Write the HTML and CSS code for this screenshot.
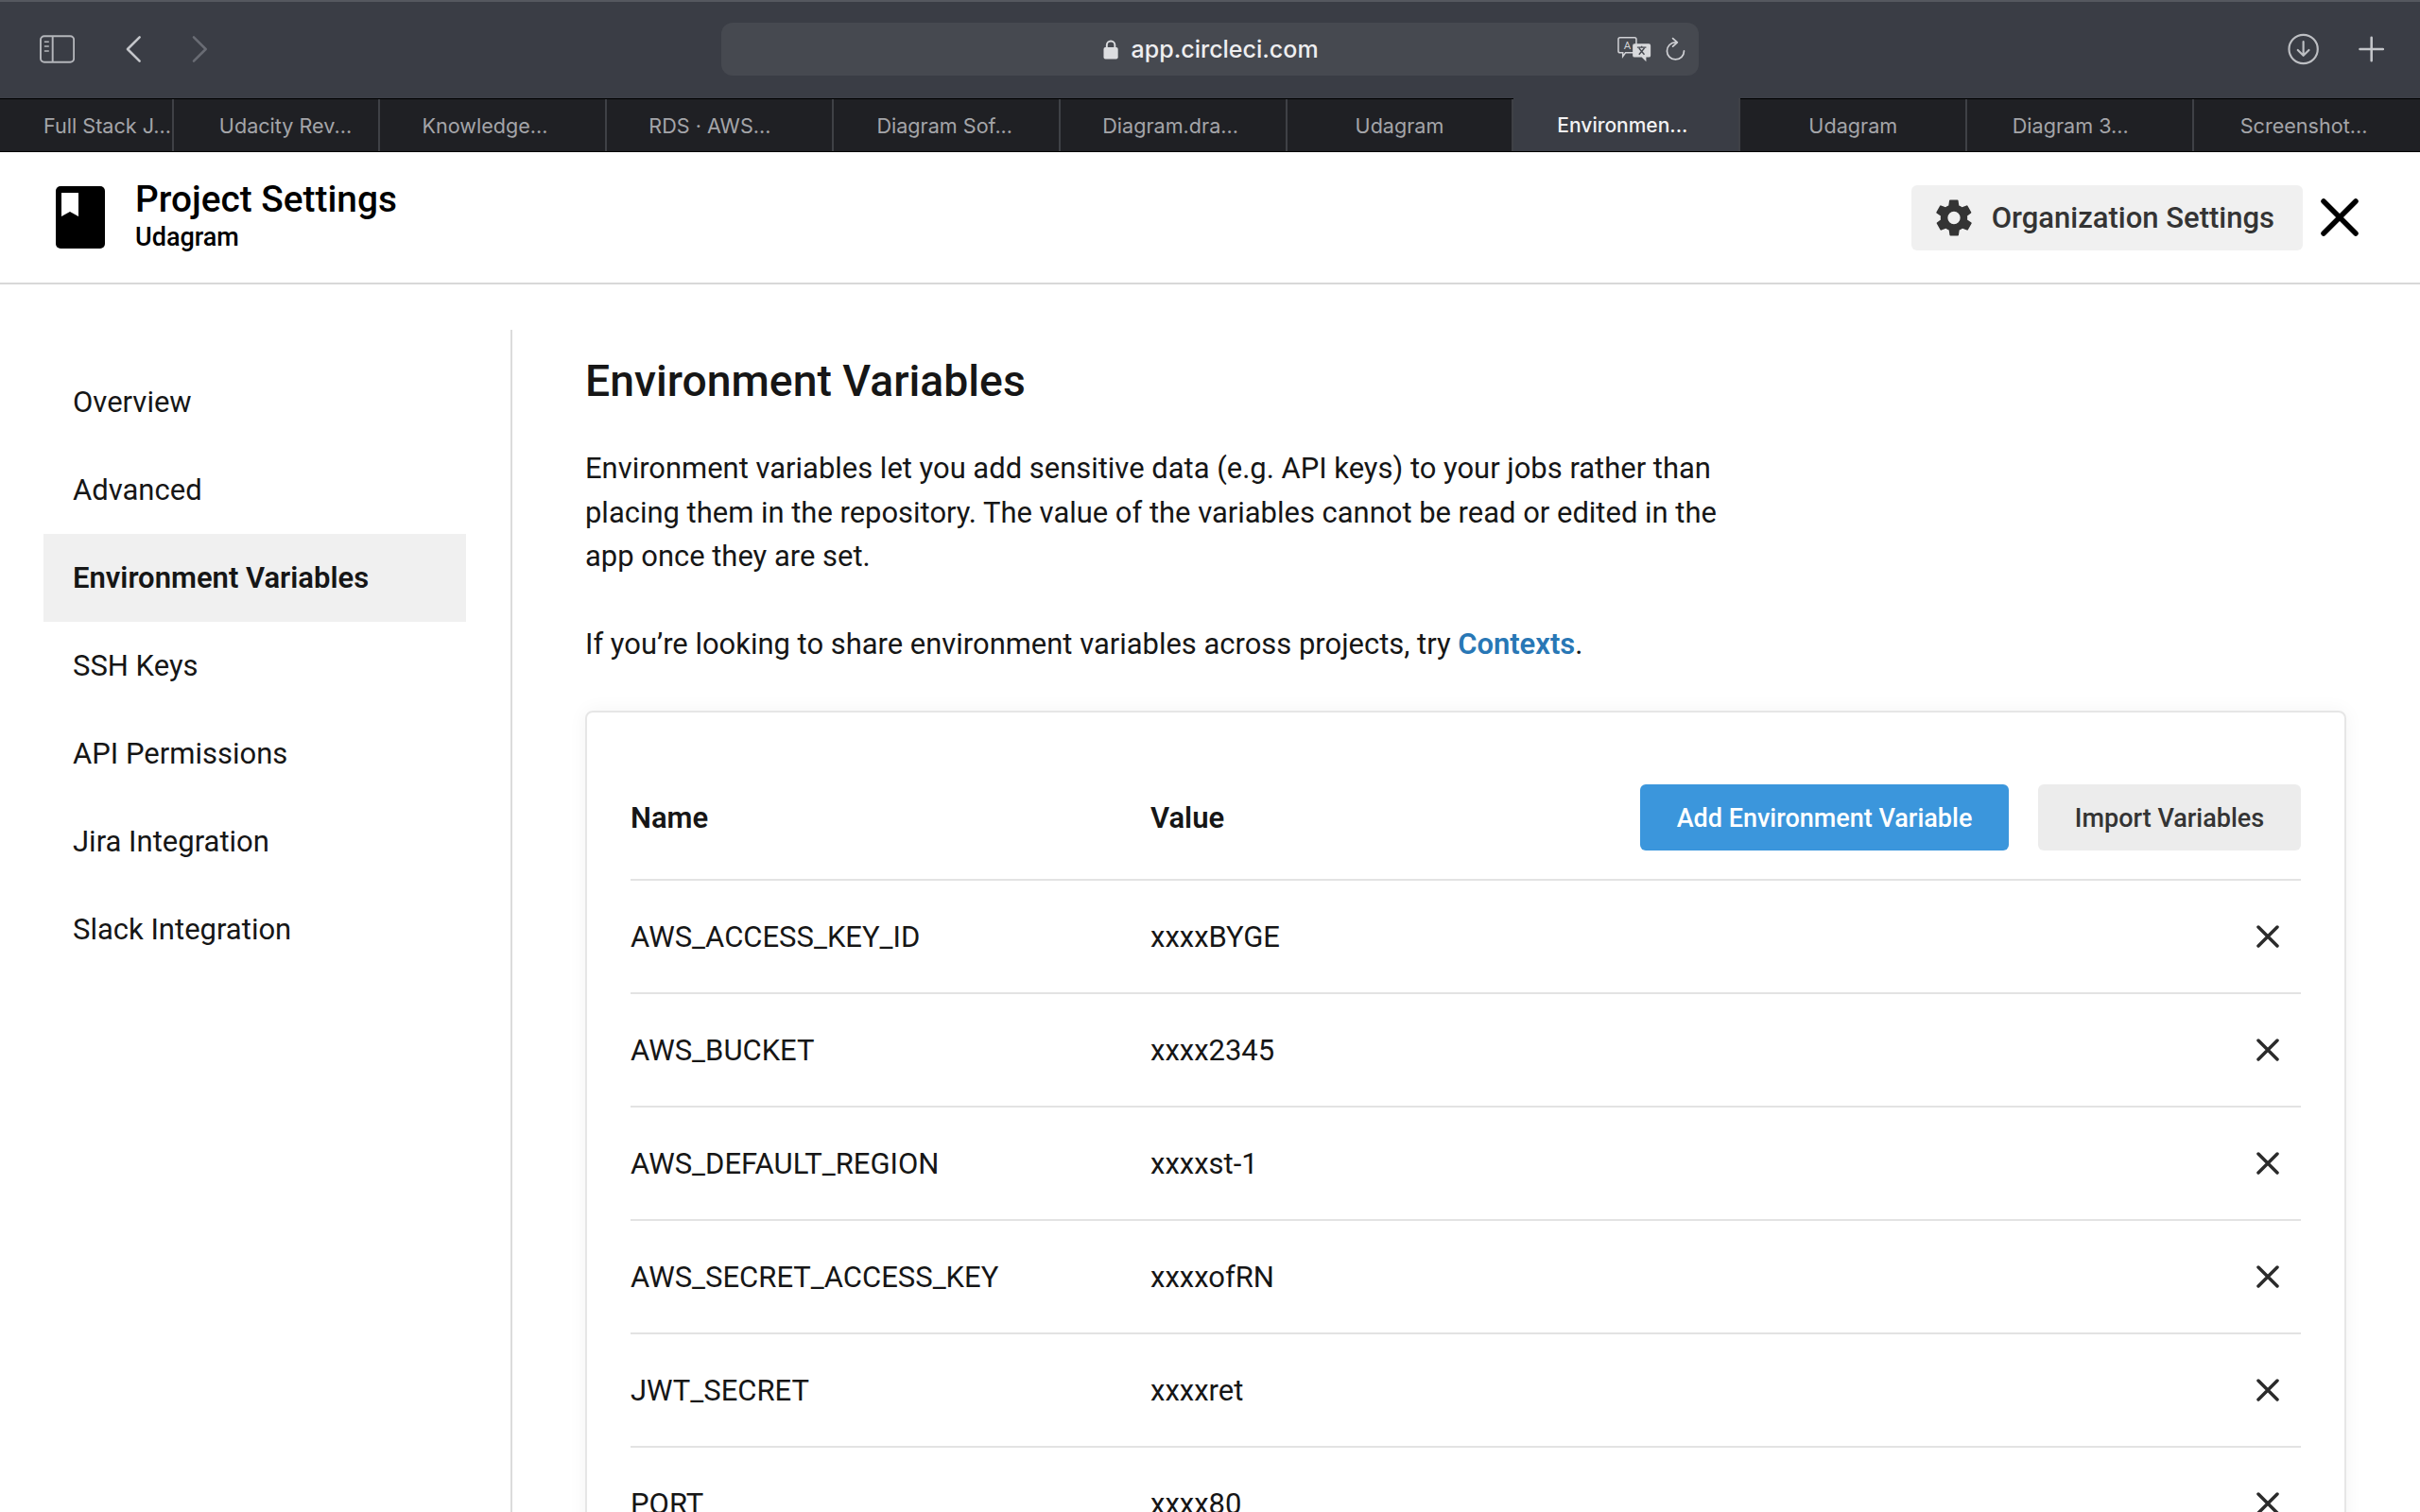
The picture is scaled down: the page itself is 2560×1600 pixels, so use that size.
FILE: index.html
```html
<!DOCTYPE html>
<html lang="en">
<head>
  <meta charset="UTF-8">
  <title>Project Settings</title>
  <link rel="stylesheet" href="styles.css">
</head>
<body>
  <div class="toolbar">
    <svg class="tool-sidebar" width="38" height="30" viewBox="0 0 38 30" fill="none" stroke="#b4b6bb" stroke-width="2">
      <rect x="1" y="1" width="36" height="28" rx="4"/>
      <path d="M14 1v28"/>
      <path d="M5 7h5M5 12h5M5 17h5" stroke-width="1.6"/>
    </svg>
    <svg class="tool-back" width="18" height="30" viewBox="0 0 18 30" fill="none" stroke="#c4c6ca" stroke-width="2.6" stroke-linecap="round" stroke-linejoin="round">
      <path d="M16 2L3 15l13 13"/>
    </svg>
    <svg class="tool-forward" width="18" height="30" viewBox="0 0 18 30" fill="none" stroke="#696c74" stroke-width="2.6" stroke-linecap="round" stroke-linejoin="round">
      <path d="M2 2l13 13L2 28"/>
    </svg>
    <div class="urlbar">
      <svg class="url-lock" width="17" height="22" viewBox="0 0 17 22">
        <path d="M4 10V6.500a4.500 4.500 0 0 1 9 0V10" fill="none" stroke="#dcdde0" stroke-width="2"/>
        <rect x="0.5" y="9" width="16" height="13" rx="2" fill="#dcdde0"/>
      </svg>
      <span class="url-text">app.circleci.com</span>
      <svg class="url-translate" width="38" height="28" viewBox="0 0 38 28">
        <path d="M3 1h16a2 2 0 0 1 2 2v13a2 2 0 0 1-2 2H9l-3 4v-4H3a2 2 0 0 1-2-2V3a2 2 0 0 1 2-2z" fill="none" stroke="#d0d1d5" stroke-width="1.6"/>
        <text x="11" y="14" class="translate-a">A</text>
        <path d="M19 8h16a2 2 0 0 1 2 2v11a2 2 0 0 1-2 2h-3v5l-5-5h-8a2 2 0 0 1-2-2V10a2 2 0 0 1 2-2z" fill="#d8d9dc"/>
        <path d="M22 12h10M27 10.500v2M24 20l6-7M30 20l-6-7" stroke="#464950" stroke-width="1.5" fill="none"/>
      </svg>
      <svg class="url-reload" width="22" height="26" viewBox="0 0 22 26" fill="none" stroke="#d0d1d5" stroke-width="1.8" stroke-linecap="round" stroke-linejoin="round">
        <path d="M11 5.500a9.500 9.500 0 1 0 9.500 9.500"/>
        <path d="M8 1l5 4.500-5 4.500"/>
      </svg>
    </div>
    <svg class="tool-download" width="34" height="34" viewBox="0 0 34 34" fill="none" stroke="#bdbfc3" stroke-width="2.2" stroke-linecap="round" stroke-linejoin="round">
      <circle cx="17" cy="17" r="15.500"/>
      <path d="M17 9v15M11 18l6 6 6-6"/>
    </svg>
    <svg class="tool-plus" width="28" height="28" viewBox="0 0 28 28" stroke="#c4c6ca" stroke-width="2.600" stroke-linecap="round">
      <path d="M14 1.500v25M1.500 14h25"/>
    </svg>
  </div>

  <div class="tabs">
    <div class="tab tab-first">Full Stack J...</div>
    <div class="tab tab-second">Udacity Rev...</div>
    <div class="tab">Knowledge...</div>
    <div class="tab">RDS · AWS...</div>
    <div class="tab">Diagram Sof...</div>
    <div class="tab">Diagram.dra...</div>
    <div class="tab">Udagram</div>
    <div class="tab tab-active">Environmen...</div>
    <div class="tab">Udagram</div>
    <div class="tab">Diagram 3...</div>
    <div class="tab">Screenshot...</div>
  </div>

  <header class="page-header">
    <svg class="project-icon" width="52" height="66" viewBox="0 0 52 66">
      <rect width="52" height="66" rx="5" fill="#000"/>
      <path d="M6 7h18v25l-9-5-9 5z" fill="#fff"/>
    </svg>
    <div class="project-titles">
      <div class="project-title">Project Settings</div>
      <div class="project-name">Udagram</div>
    </div>
    <a class="org-button">
      <svg width="38" height="39" viewBox="2 2 20 20" fill="#343434">
        <path d="M19.400 13a7.500 7.500 0 0 0 0-2l2.100-1.600a.5.5 0 0 0 .1-.6l-2-3.500a.5.5 0 0 0-.6-.2l-2.500 1a7.300 7.300 0 0 0-1.700-1l-.4-2.700a.5.5 0 0 0-.5-.4h-4a.5.5 0 0 0-.5.4l-.4 2.700a7.300 7.300 0 0 0-1.700 1l-2.500-1a.5.5 0 0 0-.6.2l-2 3.500a.5.5 0 0 0 .1.600L4.600 11a7.500 7.500 0 0 0 0 2l-2.100 1.600a.5.5 0 0 0-.1.600l2 3.500a.5.5 0 0 0 .6.2l2.500-1a7.300 7.300 0 0 0 1.700 1l.4 2.700a.5.5 0 0 0 .5.4h4a.5.5 0 0 0 .5-.4l.4-2.700a7.300 7.300 0 0 0 1.700-1l2.500 1a.5.5 0 0 0 .6-.2l2-3.500a.5.5 0 0 0-.1-.6zM12 15.500a3.500 3.500 0 1 1 0-7 3.500 3.500 0 0 1 0 7z"/>
      </svg>
      Organization Settings
    </a>
    <svg class="header-close" width="40" height="40" viewBox="0 0 40 40" stroke="#000" stroke-width="5.500" stroke-linecap="round">
      <path d="M3 3l34 34M37 3L3 37"/>
    </svg>
  </header>

  <div class="layout">
    <nav class="side-nav">
      <a class="side-link">Overview</a>
      <a class="side-link">Advanced</a>
      <a class="side-link side-active">Environment Variables</a>
      <a class="side-link">SSH Keys</a>
      <a class="side-link">API Permissions</a>
      <a class="side-link">Jira Integration</a>
      <a class="side-link">Slack Integration</a>
    </nav>

    <main class="content">
      <h1>Environment Variables</h1>
      <p class="intro">Environment variables let you add sensitive data (e.g. API keys) to your jobs rather than placing them in the repository. The value of the variables cannot be read or edited in the app once they are set.</p>
      <p class="intro">If you’re looking to share environment variables across projects, try <a class="link">Contexts</a>.</p>

      <section class="card">
        <div class="row row-head">
          <div class="col-name">Name</div>
          <div class="col-value">Value</div>
          <div class="actions">
            <button class="btn btn-primary">Add Environment Variable</button>
            <button class="btn btn-plain">Import Variables</button>
          </div>
        </div>
        <div class="row"><div class="col-name">AWS_ACCESS_KEY_ID</div><div class="col-value">xxxxBYGE</div><svg class="row-x" width="24" height="24" viewBox="0 0 24 24"><path d="M2 2l20 20M22 2L2 22"/></svg></div>
        <div class="row"><div class="col-name">AWS_BUCKET</div><div class="col-value">xxxx2345</div><svg class="row-x" width="24" height="24" viewBox="0 0 24 24"><path d="M2 2l20 20M22 2L2 22"/></svg></div>
        <div class="row"><div class="col-name">AWS_DEFAULT_REGION</div><div class="col-value">xxxxst-1</div><svg class="row-x" width="24" height="24" viewBox="0 0 24 24"><path d="M2 2l20 20M22 2L2 22"/></svg></div>
        <div class="row"><div class="col-name">AWS_SECRET_ACCESS_KEY</div><div class="col-value">xxxxofRN</div><svg class="row-x" width="24" height="24" viewBox="0 0 24 24"><path d="M2 2l20 20M22 2L2 22"/></svg></div>
        <div class="row"><div class="col-name">JWT_SECRET</div><div class="col-value">xxxxret</div><svg class="row-x" width="24" height="24" viewBox="0 0 24 24"><path d="M2 2l20 20M22 2L2 22"/></svg></div>
        <div class="row"><div class="col-name">PORT</div><div class="col-value">xxxx80</div><svg class="row-x" width="24" height="24" viewBox="0 0 24 24"><path d="M2 2l20 20M22 2L2 22"/></svg></div>
      </section>
    </main>
  </div>
</body>
</html>
```

FILE: styles.css
```css
html, body {
  height: 1600px;
  overflow: hidden;
}

body {
  margin: 0;
  font-family: Roboto, "Liberation Sans", sans-serif;
  color: #161616;
  background: #fff;
}

/* browser chrome */
.toolbar {
  height: 102px;
  display: flex;
  align-items: center;
  padding: 0 38px 0 42px;
  background: #3a3d45;
  border-top: 2px solid #55585f;
}

.tool-sidebar { margin-right: 53px; margin-top: -3px; }
.tool-back { margin-right: 53px; margin-top: -3px; }
.tool-forward { margin-right: 543px; margin-top: -3px; }

.urlbar {
  width: 1034px;
  height: 56px;
  margin-top: -2px;
  margin-right: 623px;
  display: flex;
  align-items: center;
  padding: 0 14px 0 404px;
  box-sizing: border-box;
  background: #464950;
  border-radius: 12px;
}

.url-lock { margin-right: 13px; }

.url-text {
  color: #eeeef0;
  font-family: Inter, Roboto, sans-serif;
  font-size: 25px;
  font-weight: 500;
  width: 542px;
}

.translate-a {
  font-family: Roboto, sans-serif;
  font-size: 12px;
  fill: #d0d1d5;
  text-anchor: middle;
}

.url-translate { margin-right: 15px; }

.tool-download { margin-right: 41px; margin-top: -3px; }
.tool-plus { margin-top: -3px; }

.tabs {
  height: 55px;
  display: flex;
  background: #1f2024;
  border-top: 1px solid #000;
  border-bottom: 1px solid #000;
}

.tab {
  flex: 0 0 239.9px;
  min-width: 0;
  display: flex;
  align-items: center;
  justify-content: center;
  border-right: 2px solid #3f4146;
  box-sizing: border-box;
  color: #a4a5a9;
  font-family: Inter, Roboto, sans-serif;
  font-size: 21.6px;
  white-space: nowrap;
}

.tab:last-child { border-right: 0; }
.tab-first { flex: 0 0 184px; justify-content: flex-start; padding-left: 46px; }
.tab-second { flex: 0 0 218px; padding-left: 20px; }

/* truncated titles don't sit dead centre in their tab */
.tab:nth-child(3) { padding-right: 16px; }
.tab:nth-child(4) { padding-right: 20px; }
.tab:nth-child(5) { padding-right: 3px; }
.tab:nth-child(6) { padding-right: 5px; }
.tab:nth-child(8) { padding-right: 8px; }
.tab:nth-child(10) { padding-right: 20px; }
.tab:nth-child(11) { padding-right: 8px; }

.tab-active {
  background: #3a3d45;
  color: #f2f2f3;
  font-size: 21px;
  font-weight: 500;
  margin-top: -1px;
}

/* page header */
.page-header {
  height: 138px;
  display: flex;
  align-items: center;
  padding: 0 65px 0 59px;
  border-bottom: 2px solid #d8d8d8;
}

.project-icon { margin-right: 32px; }

.project-titles {
  flex: 1;
  padding-bottom: 4px;
}

.project-title {
  font-size: 38.8px;
  font-weight: 500;
  line-height: 46px;
  color: #000;
}

.project-name {
  font-size: 27px;
  font-weight: 500;
  line-height: 34px;
  color: #000;
}

.org-button {
  height: 69px;
  display: flex;
  align-items: center;
  gap: 21px;
  padding: 0 30px 0 26px;
  background: #f0f0f0;
  border-radius: 6px;
  color: #343434;
  font-size: 31px;
  font-weight: 500;
}

.header-close { margin-left: 19px; }

/* settings layout */
.layout {
  display: flex;
  padding-top: 48px;
}

.side-nav {
  width: 494px;
  margin-left: 46px;
  flex: none;
  padding-top: 30px;
  box-sizing: border-box;
}

.side-link {
  display: block;
  width: 447px;
  height: 93px;
  line-height: 93px;
  padding-left: 31px;
  box-sizing: border-box;
  font-size: 31px;
  color: #161616;
}

.side-active {
  font-weight: 600;
  background: #f0f0f0;
}

.content {
  flex: 1;
  padding: 0 78px 0 77px;
  border-left: 2px solid #dcdcdc;
}

h1 {
  margin: 24px 0 40px;
  font-size: 46.3px;
  font-weight: 500;
  line-height: 60px;
}

.intro {
  width: 1240px;
  margin: 0 0 46px;
  font-size: 30.95px;
  line-height: 46.5px;
}

.link {
  color: #2877b5;
  font-weight: 600;
}

.card {
  margin-top: 47px;
  padding: 46px 46px 0 46px;
  border: 2px solid #e6e6e6;
  border-radius: 8px;
  box-shadow: 0 0 20px rgba(0,0,0,0.05);
}

.row {
  height: 120px;
  display: flex;
  align-items: center;
  border-bottom: 2px solid #e3e3e3;
  box-sizing: border-box;
  font-size: 31px;
}

.row-head {
  height: 132px;
  font-weight: 600;
}

.col-name { width: 550px; flex: none; }
.col-value { flex: 1; }

.actions {
  display: flex;
  gap: 31px;
}

.btn {
  height: 70px;
  padding: 2px 0 0;
  border: 0;
  border-radius: 6px;
  font-family: inherit;
  font-size: 27px;
  font-weight: 500;
}

.btn-primary {
  width: 390px;
  background: #3b96dc;
  color: #fff;
}

.btn-plain {
  width: 278px;
  background: #ececec;
  color: #343434;
}

.row-x {
  margin-right: 23px;
  fill: none;
  stroke: #2b2b2b;
  stroke-width: 3.5;
  stroke-linecap: round;
}
```
